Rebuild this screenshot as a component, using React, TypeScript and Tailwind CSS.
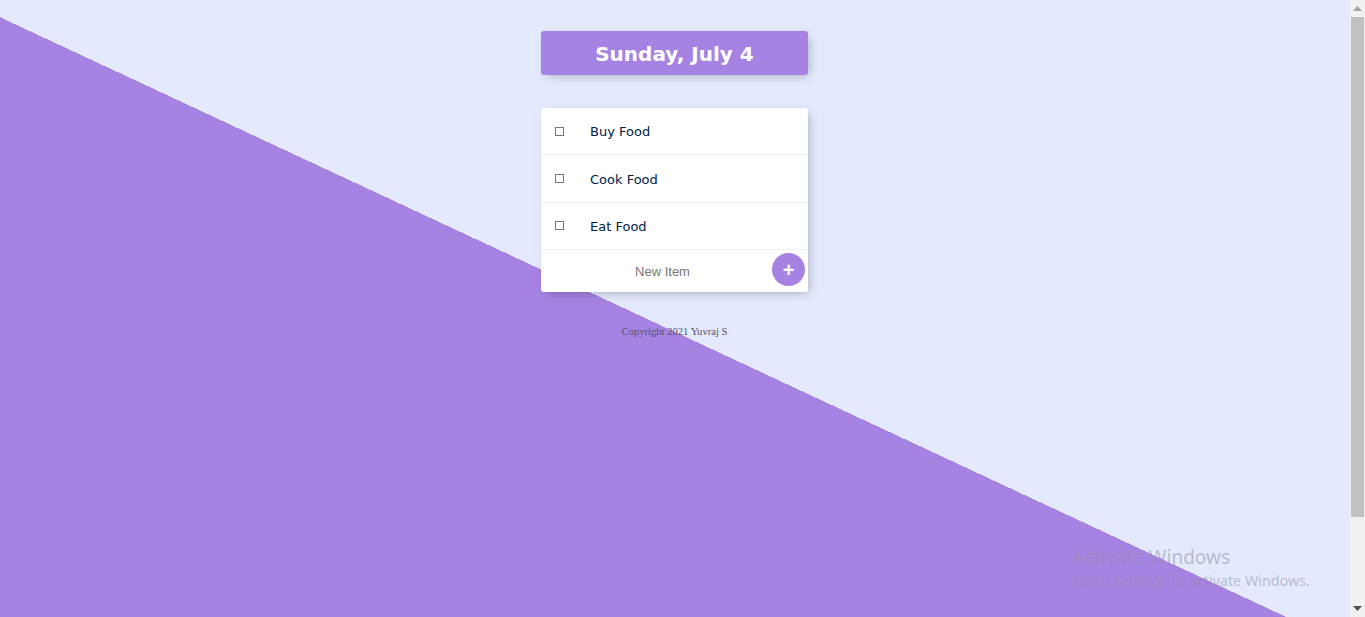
export default function App() {
  const items = ["Buy Food", "Cook Food", "Eat Food"];

  return (
    <div className="flex h-[617px] w-full overflow-hidden">
      <main className="relative h-full flex-1 overflow-hidden">
        <div className="flex h-[664px] w-full flex-col items-center bg-[#E4E9FD] bg-[linear-gradient(25deg,#A683E3_50%,#E4E9FD_50%)] pr-[1px] pt-[31px]">
          <div className="flex h-[44px] w-[267px] items-center justify-center rounded-[3px] bg-[#A683E3] pt-[2px] shadow-[3px_3px_10px_-3px_rgba(0,0,0,0.3)]">
            <h1 className="font-['Comic_Sans_MS','DejaVu_Sans',sans-serif] text-[20px] font-bold text-white">
              Sunday, July 4
            </h1>
          </div>

          <div className="mt-[33px] w-[267px] rounded-[3px] bg-white shadow-[3px_3px_10px_-3px_rgba(0,0,0,0.3)]">
            {items.map((item) => (
              <div
                key={item}
                className="flex h-[47.4px] items-center border-b border-[#F1F1F1] pt-[2px]"
              >
                <span className="ml-[14px] mb-[2px] h-[9px] w-[9px] border border-[#767676] bg-white" />
                <p className="ml-[26px] font-['Comic_Sans_MS','DejaVu_Sans',sans-serif] text-[13px] text-[#00204a]">
                  {item}
                </p>
              </div>
            ))}
            <form className="flex h-[42px] items-start">
              <input
                type="text"
                placeholder="New Item"
                className="mt-[10px] h-[22px] min-w-0 flex-1 bg-transparent pl-[12px] text-center font-['Liberation_Sans',Arial,sans-serif] text-[13px] text-[#333] outline-none placeholder:text-[#777]"
              />
              <button
                type="button"
                className="mr-[3px] mt-[3px] flex h-[33px] w-[33px] items-center justify-center rounded-full bg-[#A683E3] font-['Liberation_Sans',Arial,sans-serif] text-[20px] font-bold leading-none text-white"
              >
                +
              </button>
            </form>
          </div>

          <footer className="mt-[34px] font-['Liberation_Serif','Times_New_Roman',serif] text-[10.6px] leading-[12px] text-[#55526a]">
            Copyright 2021 Yuvraj S
          </footer>
        </div>

        <div className="pointer-events-none absolute left-[1073px] top-[545px] font-['Noto_Sans','Open_Sans',sans-serif] text-[rgba(140,140,160,0.5)]">
          <p className="text-[19px] leading-[24px]">Activate Windows</p>
          <p className="mt-[1px] text-[14.3px] leading-[21px]">Go to Settings to activate Windows.</p>
        </div>
      </main>

      <div className="flex h-full w-[15px] flex-col bg-[#F1F1F1]">
        <div className="flex h-[17px] items-center justify-center">
          <svg width="9" height="5" viewBox="0 0 9 5">
            <path d="M0 5 L4.5 0 L9 5 Z" fill="#A3A3A3" />
          </svg>
        </div>
        <div className="mx-[1px] h-[500px] bg-[#C1C1C1]" />
        <div className="flex-1" />
        <div className="flex h-[17px] items-center justify-center">
          <svg width="9" height="5" viewBox="0 0 9 5">
            <path d="M0 0 L9 0 L4.5 5 Z" fill="#505050" />
          </svg>
        </div>
      </div>
    </div>
  );
}
